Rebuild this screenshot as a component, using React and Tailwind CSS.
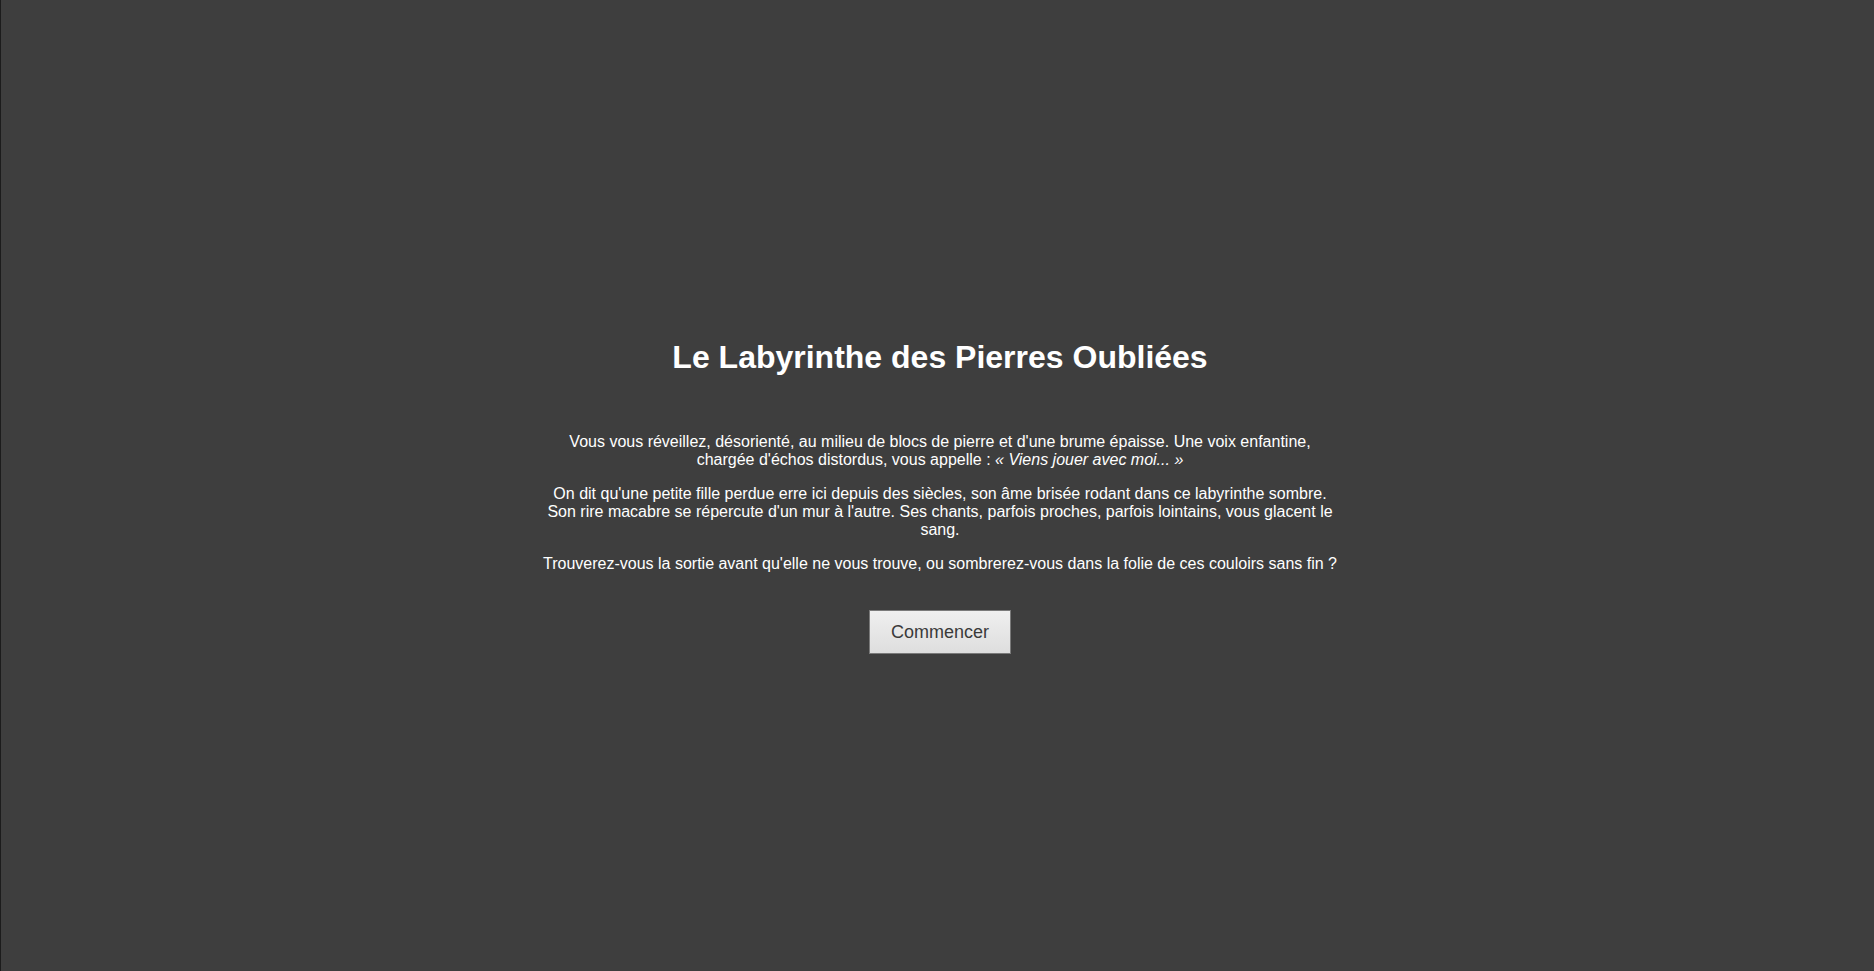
import React from "react";

const App = () => {
  return (
    <div className="flex min-h-[971px] w-full items-center justify-center border-l border-[#1c1c1c] bg-[#3e3e3e] font-['Liberation_Sans',Arial,sans-serif] text-white">
      <div className="ml-[5px] w-[800px] pt-[21px] text-center">
        {/* Title */}
        <h1 className="mb-[57px] text-[32px] font-bold leading-[37px]">
          Le Labyrinthe des Pierres Oubliées
        </h1>

        {/* Intro */}
        <div className="space-y-4 text-[16px] leading-[18px]">
          <p>
            Vous vous réveillez, désorienté, au milieu de blocs de pierre et
            d'une brume épaisse. Une voix enfantine, chargée d'échos distordus,
            vous appelle : <em>« Viens jouer avec moi... »</em>
          </p>
          <p>
            On dit qu'une petite fille perdue erre ici depuis des siècles, son
            âme brisée rodant dans ce labyrinthe sombre. Son rire macabre se
            répercute d'un mur à l'autre. Ses chants, parfois proches, parfois
            lointains, vous glacent le sang.
          </p>
          <p>
            Trouverez-vous la sortie avant qu'elle ne vous trouve, ou
            sombrerez-vous dans la folie de ces couloirs sans fin ?
          </p>
        </div>

        {/* Start button */}
        <button className="mt-[37px] border border-[#7a7a7a] bg-gradient-to-b from-[#efefef] to-[#dedede] px-[21px] py-[11px] text-[18px] leading-[20px] text-[#3a3a3a] hover:from-[#f5f5f5] hover:to-[#e6e6e6]">
          Commencer
        </button>
      </div>
    </div>
  );
};

export default App;
